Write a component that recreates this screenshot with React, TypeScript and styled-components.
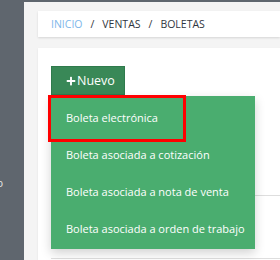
import styled, { createGlobalStyle } from "styled-components";
import { FaPlus } from "react-icons/fa";

const GlobalStyle = createGlobalStyle`
  html, body {
    margin: 0;
    padding: 0;
    overflow: hidden;
    background: #f4f4f4;
    font-family: "Open Sans", "Liberation Sans", sans-serif;
  }
`;

const Layout = styled.div`
  display: grid;
  grid-template-columns: 24px 1fr;
  width: 280px;
  height: 260px;
  overflow: hidden;
`;

const Sidebar = styled.aside`
  background-color: #5f666e;
  display: flex;
  flex-direction: column;
  padding-top: 175px;
  overflow: hidden;
`;

const SideItem = styled.div`
  display: flex;
  justify-content: flex-end;
  padding-right: 21px;
  white-space: nowrap;
  color: #e6e6e6;
  font-size: 11px;
  line-height: 16px;
`;

const Main = styled.main`
  border-top: 2px solid #5f666e;
  padding: 9px 0 0 14px;
  display: flex;
  flex-direction: column;
  gap: 11px;
`;

const Breadcrumb = styled.nav`
  background: #fff;
  height: 26px;
  display: flex;
  align-items: center;
  padding-left: 13px;
  box-shadow: 0 1px 2px rgba(0, 0, 0, 0.12);
  font-size: 10.5px;
  text-transform: uppercase;
  color: #333;
  gap: 8px;
`;

const Crumb = styled.span<{ $link?: boolean }>`
  color: ${(p) => (p.$link ? "#7db6ea" : "#2f3640")};
`;

const Card = styled.section`
  background: #fff;
  height: 220px;
  padding: 18px 0 0 13px;
  box-shadow: 0 1px 2px rgba(0, 0, 0, 0.08);
`;

const Toolbar = styled.div`
  position: relative;
`;

const NewButton = styled.button`
  display: flex;
  align-items: center;
  gap: 1px;
  height: 29px;
  width: 74px;
  padding: 0 0 0 14px;
  border: 1px solid #2f7a4c;
  background: #398857;
  color: #fff;
  font-family: inherit;
  font-size: 12.5px;
  cursor: pointer;

  svg {
    font-size: 10px;
  }
`;

const TableLine = styled.div<{ $top: number }>`
  margin-top: ${(p) => p.$top}px;
  border-top: 1px solid #dedede;
`;

const Menu = styled.ul`
  position: absolute;
  top: 30px;
  left: 0;
  width: 204px;
  margin: 0;
  padding: 3px 0 2px;
  list-style: none;
  background: #4aad6f;
  box-shadow: 0 4px 10px rgba(0, 0, 0, 0.18);
  z-index: 2;
`;

const MenuItem = styled.li`
  height: 37px;
  display: flex;
  align-items: center;
  padding-left: 15px;
  color: #fff;
  font-size: 11px;
  font-weight: 500;
  white-space: nowrap;
`;

const Highlight = styled.div`
  position: absolute;
  top: 29px;
  left: -3px;
  width: 132px;
  height: 41px;
  border: 3px solid #ff0000;
  z-index: 3;
  pointer-events: none;
`;

const items = [
  "Boleta electrónica",
  "Boleta asociada a cotización",
  "Boleta asociada a nota de venta",
  "Boleta asociada a orden de trabajo",
];

export default function App() {
  return (
    <>
      <GlobalStyle />
      <Layout>
        <Sidebar>
          <SideItem>Servicio</SideItem>
        </Sidebar>
        <Main>
          <Breadcrumb>
            <Crumb $link>Inicio</Crumb>
            <Crumb>/</Crumb>
            <Crumb>Ventas</Crumb>
            <Crumb>/</Crumb>
            <Crumb>Boletas</Crumb>
          </Breadcrumb>
          <Card>
            <Toolbar>
              <NewButton>
                <FaPlus />
                Nuevo
              </NewButton>
              <Menu>
                {items.map((item) => (
                  <MenuItem key={item}>{item}</MenuItem>
                ))}
              </Menu>
              <Highlight />
            </Toolbar>
            <TableLine $top={100} />
            <TableLine $top={62} />
          </Card>
        </Main>
      </Layout>
    </>
  );
}
